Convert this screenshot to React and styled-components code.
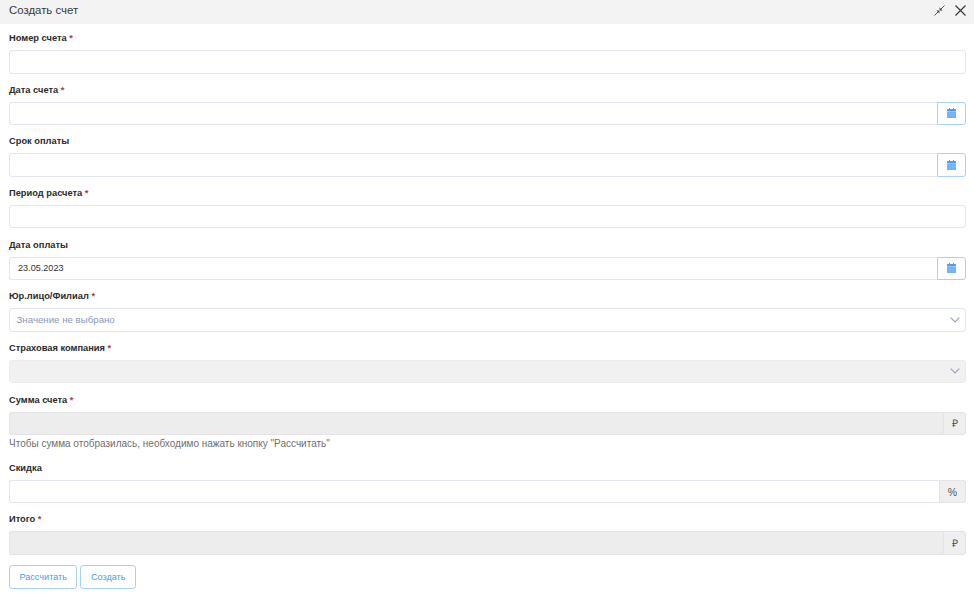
import React from 'react';
import styled, { createGlobalStyle } from 'styled-components';

const GlobalStyle = createGlobalStyle`
  html, body {
    margin: 0;
    padding: 0;
    background: #fff;
    font-family: "Liberation Sans", Arial, sans-serif;
  }
  * { box-sizing: border-box; }
`;

const Header = styled.div`
  height: 24px;
  background: #f3f3f3;
  display: flex;
  align-items: center;
  justify-content: space-between;
  padding: 0 8px 4px 9px;
  color: #3a3a3a;
  font-size: 11.4px;
`;

const HeaderIcons = styled.div`
  display: flex;
  align-items: center;
  gap: 10px;
`;

const Form = styled.form`
  display: flex;
  flex-direction: column;
  padding: 7px 8px 0 9px;
`;

const Field = styled.div`
  display: flex;
  flex-direction: column;
  margin-bottom: 9.17px;
`;

const Label = styled.label`
  height: 15px;
  margin-bottom: 4px;
  line-height: 15px;
  font-size: 9.3px;
  font-weight: 700;
  color: #2b2b2b;
`;

const Required = styled.span`
  color: #b03a3a;
`;

const Group = styled.div`
  display: flex;
  height: 23.5px;
`;

const Input = styled.input`
  flex: 1;
  min-width: 0;
  height: 23.5px;
  padding: 0 8px;
  font-family: inherit;
  font-size: 9.1px;
  color: #333;
  background: ${(p) => (p.disabled ? '#ededed' : '#fff')};
  border: 1px solid ${(p) => (p.disabled ? '#e3e3e3' : '#e1e6f0')};
  border-radius: ${(p) => (p.$joined ? '3px 0 0 3px' : '3px')};
  border-right-width: ${(p) => (p.$joined ? '0' : '1px')};
  outline: none;
`;

const CalendarButton = styled.div`
  width: 29px;
  display: flex;
  align-items: center;
  justify-content: center;
  background: #fff;
  border: 1px solid #a9d0f7;
  border-radius: 0 3px 3px 0;
`;

const Addon = styled.div`
  width: ${(p) => p.$width}px;
  display: flex;
  align-items: center;
  justify-content: center;
  font-size: 10.5px;
  color: #555;
  background: #efefef;
  border: 1px solid #e3e3e3;
  border-radius: 0 3px 3px 0;
`;

const Select = styled.div`
  height: 23.5px;
  display: flex;
  align-items: center;
  justify-content: space-between;
  padding: 0 5px 1px 6.5px;
  font-size: 9.7px;
  color: #8a99b8;
  background: ${(p) => (p.$disabled ? '#f1f1f1' : '#fff')};
  border: 1px solid ${(p) => (p.$disabled ? '#ebebeb' : '#e1e6f0')};
  border-radius: 3px;
`;

const Hint = styled.div`
  height: 16.5px;
  margin-top: 0.5px;
  margin-bottom: -0.5px;
  line-height: 16.5px;
  font-size: 10px;
  color: #6f6f6f;
`;

const Buttons = styled.div`
  display: flex;
  gap: 3px;
  margin-top: 1px;
`;

const Button = styled.button`
  height: 23.5px;
  padding: 0 9.5px;
  font-family: inherit;
  font-size: 9.1px;
  color: #4f9de8;
  background: #fff;
  border: 1px solid #a9d0f7;
  border-radius: 3px;
`;

const Chevron = () => (
  <svg width="10" height="6" viewBox="0 0 10 6" fill="none">
    <path d="M0.7 0.7L5 5L9.3 0.7" stroke="#98a6bd" strokeWidth="1.2" />
  </svg>
);

const CalendarIcon = () => (
  <svg width="9" height="10" viewBox="0 0 9 10">
    <path d="M2 0h1v1.5H2z M6 0h1v1.5H6z" fill="#4f9de8" />
    <rect x="0" y="1" width="9" height="2.4" rx="0.6" fill="#4f9de8" />
    <rect x="0" y="3.8" width="9" height="6.2" rx="0.6" fill="#6db0f5" />
    <path d="M0 5.8h9M0 7.8h9M3 3.8v6.2M6 3.8v6.2" stroke="#8ec3f8" strokeWidth="0.4" />
  </svg>
);

const ShrinkIcon = () => (
  <svg width="11" height="11" viewBox="0 0 11 11" fill="none">
    <path d="M0.5 10.5L4.6 6.4M10.5 0.5L6.4 4.6" stroke="#555" strokeWidth="1" />
    <path d="M2.4 5.6H5.4V8.6Z M5.6 2.4V5.4H8.6Z" fill="#444" />
  </svg>
);

const CloseIcon = () => (
  <svg width="11" height="11" viewBox="0 0 11 11" fill="none">
    <path d="M0.5 0.5L10.5 10.5M10.5 0.5L0.5 10.5" stroke="#333" strokeWidth="1.1" />
  </svg>
);

function Title({ text, required }) {
  return (
    <Label>
      {text} {required && <Required>*</Required>}
    </Label>
  );
}

function App() {
  return (
    <>
      <GlobalStyle />
      <Header>
        <span>Создать счет</span>
        <HeaderIcons>
          <ShrinkIcon />
          <CloseIcon />
        </HeaderIcons>
      </Header>
      <Form>
        <Field>
          <Title text="Номер счета" required />
          <Group><Input /></Group>
        </Field>
        <Field>
          <Title text="Дата счета" required />
          <Group>
            <Input $joined />
            <CalendarButton><CalendarIcon /></CalendarButton>
          </Group>
        </Field>
        <Field>
          <Title text="Срок оплаты" />
          <Group>
            <Input $joined />
            <CalendarButton><CalendarIcon /></CalendarButton>
          </Group>
        </Field>
        <Field>
          <Title text="Период расчета" required />
          <Group><Input /></Group>
        </Field>
        <Field>
          <Title text="Дата оплаты" />
          <Group>
            <Input $joined defaultValue="23.05.2023" />
            <CalendarButton><CalendarIcon /></CalendarButton>
          </Group>
        </Field>
        <Field>
          <Title text="Юр.лицо/Филиал" required />
          <Select>
            <span>Значение не выбрано</span>
            <Chevron />
          </Select>
        </Field>
        <Field>
          <Title text="Страховая компания" required />
          <Select $disabled>
            <span />
            <Chevron />
          </Select>
        </Field>
        <Field>
          <Title text="Сумма счета" required />
          <Group>
            <Input $joined disabled />
            <Addon $width={23}>₽</Addon>
          </Group>
          <Hint>Чтобы сумма отобразилась, необходимо нажать кнопку "Рассчитать"</Hint>
        </Field>
        <Field>
          <Title text="Скидка" />
          <Group>
            <Input $joined />
            <Addon $width={27}>%</Addon>
          </Group>
        </Field>
        <Field>
          <Title text="Итого" required />
          <Group>
            <Input $joined disabled />
            <Addon $width={23}>₽</Addon>
          </Group>
        </Field>
        <Buttons>
          <Button type="button">Рассчитать</Button>
          <Button type="button">Создать</Button>
        </Buttons>
      </Form>
    </>
  );
}

export default App;
